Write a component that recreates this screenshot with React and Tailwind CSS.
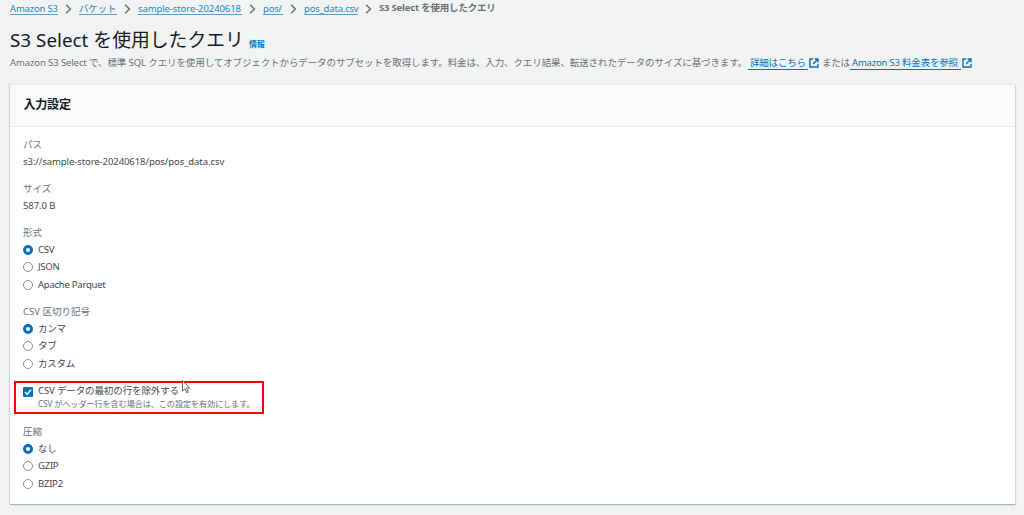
import React from 'react';

const crumbs = [
  { label: 'Amazon S3', width: 'w-[48px]' },
  { label: 'バケット', width: 'w-[38px]' },
  { label: 'sample-store-20240618', width: 'w-[104px] tracking-[-0.01em]' },
  { label: 'pos/', width: 'w-[20px]' },
  { label: 'pos_data.csv', width: 'w-[54px]' },
];

const ChevronIcon = () => (
  <svg className="mx-[7px] h-[10px] w-[7px] shrink-0" viewBox="0 0 7 10" fill="none" stroke="#687078" strokeWidth="1.5">
    <path d="M1.2 0.8 L5.4 5 L1.2 9.2" />
  </svg>
);

const ExternalIcon = () => (
  <svg className="ml-px h-[10px] w-[10px] shrink-0" viewBox="0 0 10 10" fill="none" stroke="#0073bb" strokeWidth="1.4">
    <path d="M4 1 H1 V9 H9 V6" />
    <path d="M5.6 1 H9 V4.4 M9 1 L4 6" />
  </svg>
);

const Radio = ({ label, checked }) => (
  <label className="flex h-[17.5px] items-center">
    <span
      className={
        checked
          ? 'mr-[5px] h-[10px] w-[10px] shrink-0 rounded-full border-[3px] border-[#0073bb] bg-white'
          : 'mr-[5px] h-[10px] w-[10px] shrink-0 rounded-full border border-[#879596] bg-white'
      }
    />
    <span className="tracking-[-0.025em] whitespace-nowrap">{label}</span>
  </label>
);

const RadioGroup = ({ title, options }) => (
  <div>
    <div className="h-4 leading-4 tracking-normal text-[#687078]">{title}</div>
    {options.map((option, i) => (
      <Radio key={option} label={option} checked={i === 0} />
    ))}
  </div>
);

const Field = ({ title, children }) => (
  <div className="mb-3">
    <div className="h-4 leading-4 tracking-normal text-[#687078]">{title}</div>
    <div className="h-4 leading-[18px] tracking-[-0.008em]">{children}</div>
  </div>
);

const App = () => {
  return (
    <div className="h-[515px] w-[1024px] overflow-hidden bg-[#f2f3f3] pr-[9.5px] pl-[10px] font-['Noto_Sans','Noto_Sans_CJK_JP',sans-serif] text-[9.5px] tracking-[-0.02em] text-[#414750]">
      {/* Breadcrumbs */}
      <nav className="flex h-[17px] items-center whitespace-nowrap">
        {crumbs.map((crumb) => (
          <React.Fragment key={crumb.label}>
            <a className={`${crumb.width} h-[13px] border-b border-[#5a9fce] leading-[13px] text-[#2d83bd]`}>{crumb.label}</a>
            <ChevronIcon />
          </React.Fragment>
        ))}
        <span className="font-bold text-[#687078]">S3 Select を使用したクエリ</span>
      </nav>

      {/* Page title */}
      <header className="h-[67px] pt-[9px]">
        <div className="flex h-7 items-center whitespace-nowrap">
          <h1 className="text-[18.8px] leading-7 tracking-[0.002em] text-[#16191f]">S3 Select を使用したクエリ</h1>
          <a className="mt-[7px] ml-[5px] text-[8px] font-bold text-[#0073bb]">情報</a>
        </div>
        <div className="flex h-[18px] items-center whitespace-nowrap text-[#687078]">
          <span className="w-[738px] tracking-[-0.011em]">
            Amazon S3 Select で、標準 SQL クエリを使用してオブジェクトからデータのサブセットを取得します。料金は、入力、クエリ結果、転送されたデータのサイズに基づきます。
          </span>
          <a className="h-[14px] w-[60px] border-b border-[#0073bb] pl-[2px] leading-[14px] text-[#0073bb]">詳細はこちら</a>
          <ExternalIcon />
          <span className="ml-[3px] w-[28px]">または</span>
          <a className="h-[14px] w-[111px] border-b border-[#0073bb] pl-[2px] leading-[14px] text-[#0073bb]">Amazon S3 料金表を参照</a>
          <ExternalIcon />
        </div>
      </header>

      {/* Input settings */}
      <section className="h-[420px] bg-white shadow-[0_1px_1px_0_#aab7b8,1px_1px_1px_0_#d5dbdb,-1px_0_1px_0_#d5dbdb]">
        <h2 className="flex h-[43px] items-center border-y border-[#eaeded] bg-[#fafafa] pb-[2px] pl-[13.5px] text-[12px] font-bold text-[#16191f]">
          入力設定
        </h2>
        <div className="pt-[10px] pl-[13px]">
          <Field title="パス">s3://sample-store-20240618/pos/pos_data.csv</Field>
          <Field title="サイズ">587.0 B</Field>
          <RadioGroup title="形式" options={['CSV', 'JSON', 'Apache Parquet']} />
          <div className="mt-[10.5px]">
            <RadioGroup title="CSV 区切り記号" options={['カンマ', 'タブ', 'カスタム']} />
          </div>

          {/* Highlighted checkbox */}
          <div className="relative mt-[8px] -ml-[9px] h-[33px] w-[250px] border-2 border-[#ff0000] pt-[2px] pl-[7px]">
            <div className="flex h-[14px] items-center tracking-[-0.012em] whitespace-nowrap">
              <svg className="mr-[5px] h-[10px] w-[10px] shrink-0" viewBox="0 0 10 10">
                <rect width="10" height="10" rx="1" fill="#0073bb" />
                <path d="M2 5 L4.2 7.2 L8 2.8" fill="none" stroke="#fff" strokeWidth="1.4" />
              </svg>
              <span>CSV データの最初の行を除外する</span>
            </div>
            <div className="h-[11px] pl-[15px] text-[8.15px] leading-[10px] tracking-[-0.01em] whitespace-nowrap text-[#687078]">
              CSV がヘッダー行を含む場合は、この設定を有効にします。
            </div>
            <svg className="absolute top-[-4px] left-[165px] h-[16px] w-[11px]" viewBox="0 0 11 16">
              <path d="M1.5 1.5 V12 L4 9.8 L5.8 13.8 L7.3 13.1 L5.6 9.2 H8.8 Z" fill="#fff" stroke="#555" strokeWidth="0.9" />
            </svg>
          </div>

          <div className="mt-[10.5px]">
            <RadioGroup title="圧縮" options={['なし', 'GZIP', 'BZIP2']} />
          </div>
        </div>
      </section>
    </div>
  );
};

export default App;
